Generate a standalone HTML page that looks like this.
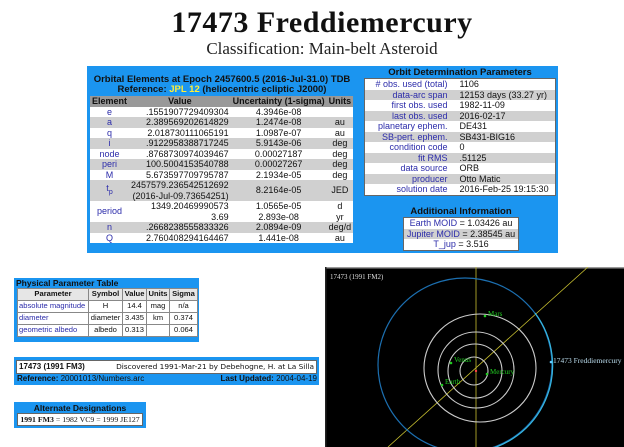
<!DOCTYPE html>
<html><head><meta charset="utf-8"><style>
*{margin:0;padding:0;box-sizing:border-box}
body{width:624px;height:447px;background:#fff;position:relative;overflow:hidden;font-family:"Liberation Sans",sans-serif;font-size:9px;color:#111}
.abs{position:absolute}
.blue{background:#1b95f0}
table{border-collapse:collapse}
.lk{color:#2c2caa}
.g{background:#d0d0d0}
.w{background:#fff}
td,th{padding:0 2px;white-space:nowrap;line-height:10.5px;height:10.5px}
.pt td,.pt th{border:1px solid #888;overflow:hidden}
</style></head><body>
<div class="abs" style="left:0;top:7px;width:644px;text-align:center;font-family:'Liberation Serif',serif;font-weight:bold;font-size:30px;line-height:31px;letter-spacing:0.5px">17473 Freddiemercury</div>
<div class="abs" style="left:0;top:39px;width:644px;text-align:center;font-family:'Liberation Serif',serif;font-size:17px;line-height:20px;color:#222">Classification: Main-belt Asteroid</div>

<div class="abs blue" style="left:87px;top:66px;width:471px;height:187px"></div>
<div class="abs" style="left:87px;top:75px;width:270px;text-align:center;font-weight:bold;font-size:9.5px;line-height:10px;color:#111">Orbital Elements at Epoch 2457600.5 (2016-Jul-31.0) TDB<br>Reference: <span style="color:#ffef3a">JPL 12</span> (heliocentric ecliptic J2000)</div>
<table class="abs" style="left:90px;top:96px;width:259px;text-align:center">
<tr style="background:#999"><th style="width:72px;text-align:left">Element</th><th style="width:66px">Value</th><th style="width:90px">Uncertainty (1-sigma)</th><th>Units</th></tr>
<tr class="w"><td class="lk">e</td><td style="text-align:right">.1551907729409304</td><td>4.3946e-08</td><td></td></tr>
<tr class="g"><td class="lk">a</td><td style="text-align:right">2.389569202614829</td><td>1.2474e-08</td><td>au</td></tr>
<tr class="w"><td class="lk">q</td><td style="text-align:right">2.018730111065191</td><td>1.0987e-07</td><td>au</td></tr>
<tr class="g"><td class="lk">i</td><td style="text-align:right">.9122958388717245</td><td>5.9143e-06</td><td>deg</td></tr>
<tr class="w"><td class="lk">node</td><td style="text-align:right">.8768730974039467</td><td>0.00027187</td><td>deg</td></tr>
<tr class="g"><td class="lk">peri</td><td style="text-align:right">100.5004153540788</td><td>0.00027267</td><td>deg</td></tr>
<tr class="w"><td class="lk">M</td><td style="text-align:right">5.673597709795787</td><td>2.1934e-05</td><td>deg</td></tr>
<tr class="g"><td class="lk">t<sub style="font-size:7px">p</sub></td><td style="text-align:right">2457579.236542512692<br>(2016-Jul-09.73654251)</td><td>8.2164e-05</td><td>JED</td></tr>
<tr class="w"><td class="lk">period</td><td style="text-align:right">1349.20469990573<br>3.69</td><td>1.0565e-05<br>2.893e-08</td><td>d<br>yr</td></tr>
<tr class="g"><td class="lk">n</td><td style="text-align:right">.2668238555833326</td><td>2.0894e-09</td><td>deg/d</td></tr>
<tr class="w"><td class="lk">Q</td><td style="text-align:right">2.760408294164467</td><td>1.441e-08</td><td>au</td></tr>
</table>

<div class="abs" style="left:364px;top:67px;width:192px;text-align:center;font-weight:bold;font-size:9.5px;line-height:11px">Orbit Determination Parameters</div>
<table class="abs" style="left:364px;top:78px;width:192px;border:1px solid #666">
<tr class="w"><td class="lk" style="text-align:right;width:85px">#&nbsp;obs. used (total)</td><td style="padding-left:10px">1106</td></tr>
<tr class="g"><td class="lk" style="text-align:right">data-arc span</td><td style="padding-left:10px">12153 days (33.27 yr)</td></tr>
<tr class="w"><td class="lk" style="text-align:right">first obs. used</td><td style="padding-left:10px">1982-11-09</td></tr>
<tr class="g"><td class="lk" style="text-align:right">last obs. used</td><td style="padding-left:10px">2016-02-17</td></tr>
<tr class="w"><td class="lk" style="text-align:right">planetary ephem.</td><td style="padding-left:10px">DE431</td></tr>
<tr class="g"><td class="lk" style="text-align:right">SB-pert. ephem.</td><td style="padding-left:10px">SB431-BIG16</td></tr>
<tr class="w"><td class="lk" style="text-align:right">condition code</td><td style="padding-left:10px">0</td></tr>
<tr class="g"><td class="lk" style="text-align:right">fit RMS</td><td style="padding-left:10px">.51125</td></tr>
<tr class="w"><td class="lk" style="text-align:right">data source</td><td style="padding-left:10px">ORB</td></tr>
<tr class="g"><td class="lk" style="text-align:right">producer</td><td style="padding-left:10px">Otto Matic</td></tr>
<tr class="w"><td class="lk" style="text-align:right">solution date</td><td style="padding-left:10px">2016-Feb-25 19:15:30</td></tr>
</table>
<div class="abs" style="left:403px;top:206px;width:116px;text-align:center;font-weight:bold;font-size:9.5px;line-height:11px">Additional Information</div>
<table class="abs" style="left:403px;top:217px;width:116px;border:1px solid #666;text-align:center">
<tr class="w"><td><span class="lk">Earth MOID</span> = 1.03426 au</td></tr>
<tr class="g"><td><span class="lk">Jupiter MOID</span> = 2.38545 au</td></tr>
<tr class="w"><td><span class="lk">T_jup</span> = 3.516</td></tr>
</table>

<div class="abs blue" style="left:14px;top:278px;width:185px;height:64px"></div>
<div class="abs" style="left:16px;top:278px;font-weight:bold;font-size:8.5px;line-height:10px">Physical Parameter Table</div>
<table class="abs pt" style="left:17px;top:288px;width:180px;font-size:7.6px;text-align:center;background:#fff;table-layout:fixed">
<colgroup><col style="width:71px"><col style="width:34px"><col style="width:24px"><col style="width:23px"><col style="width:28px"></colgroup>
<tr style="background:#e6e6e6"><th style="height:12px;padding:0">Parameter</th><th style="padding:0">Symbol</th><th style="padding:0">Value</th><th style="padding:0">Units</th><th style="padding:0">Sigma</th></tr>
<tr><td class="lk" style="height:12px;text-align:left;padding:0 1px">absolute magnitude</td><td style="padding:0">H</td><td style="padding:0">14.4</td><td style="padding:0">mag</td><td style="padding:0">n/a</td></tr>
<tr><td class="lk" style="height:12px;text-align:left;padding:0 1px">diameter</td><td style="padding:0">diameter</td><td style="padding:0">3.435</td><td style="padding:0">km</td><td style="padding:0">0.374</td></tr>
<tr><td class="lk" style="height:12px;text-align:left;padding:0 1px">geometric albedo</td><td style="padding:0">albedo</td><td style="padding:0">0.313</td><td style="padding:0"></td><td style="padding:0">0.064</td></tr>
</table>

<div class="abs blue" style="left:14px;top:357px;width:305px;height:28px"></div>
<div class="abs" style="left:16px;top:360px;width:301px;height:14px;background:#fff;border:1px solid #666;font-size:8px;line-height:12px;padding-left:2px;white-space:nowrap"><b>17473 (1991 FM3)</b><span style="position:absolute;right:2px;font-family:'DejaVu Sans',sans-serif;font-size:7.4px">Discovered 1991-Mar-21 by Debehogne, H. at La Silla</span></div>
<div class="abs" style="left:17px;top:374px;width:300px;font-size:8px;line-height:10px;white-space:nowrap"><b>Reference:</b> 20001013/Numbers.arc<span style="position:absolute;right:0"><b>Last Updated:</b> 2004-04-19</span></div>

<div class="abs blue" style="left:14px;top:402px;width:132px;height:26px"></div>
<div class="abs" style="left:14px;top:403px;width:132px;text-align:center;font-weight:bold;font-size:8.5px;line-height:10px">Alternate Designations</div>
<div class="abs" style="left:17px;top:413px;width:126px;height:13px;background:#fff;border:1px solid #666;font-family:'Liberation Serif',serif;font-size:7.8px;line-height:11px;text-align:center;white-space:nowrap"><b>1991 FM3</b> = 1982 VC9 = 1999 JE127</div>

<svg class="abs" style="left:325px;top:267px" width="299" height="180" viewBox="0 0 299 180">
<rect width="299" height="180" fill="#000"/>
<rect width="299" height="1.5" fill="#999"/>
<rect width="1.5" height="180" fill="#222"/>
<path d="M151 0 V180" stroke="#c8c030" stroke-width="0.8"/>
<path d="M63 180 L263 0" stroke="#c8c030" stroke-width="0.8"/>
<ellipse cx="140" cy="98" rx="87" ry="87" fill="none" stroke="#1c6fb0" stroke-width="1.2"/>
<path d="M210 46 A87 87 0 0 1 150 185" fill="none" stroke="#37b6e0" stroke-width="1.2"/>
<g fill="none" stroke="#ccc" stroke-width="1.1">
<ellipse cx="155" cy="101" rx="56" ry="54"/>
<ellipse cx="151" cy="103" rx="38" ry="38"/>
<ellipse cx="150" cy="104" rx="27" ry="27"/>
<ellipse cx="149" cy="104" rx="14" ry="14"/>
</g>
<circle cx="151" cy="104" r="1.2" fill="#f44"/>
<g fill="#2c2" font-family="Liberation Serif,serif" font-size="7">
<circle cx="160" cy="49" r="1.3"/><text x="163" y="49">Mars</text>
<circle cx="126" cy="96" r="1.3"/><text x="129" y="95">Venus</text>
<circle cx="162" cy="107" r="1.3"/><text x="165" y="107">Mercury</text>
<circle cx="117" cy="118" r="1.3"/><text x="120" y="117">Earth</text>
</g>
<circle cx="226" cy="95" r="1.3" fill="#6cf"/>
<text x="228" y="96" fill="#bde" font-family="Liberation Serif,serif" font-size="7.5">17473 Freddiemercury</text>
<text x="5" y="12" fill="#ddd" font-family="Liberation Serif,serif" font-size="7">17473 (1991 FM2)</text>
</svg>
</body></html>
